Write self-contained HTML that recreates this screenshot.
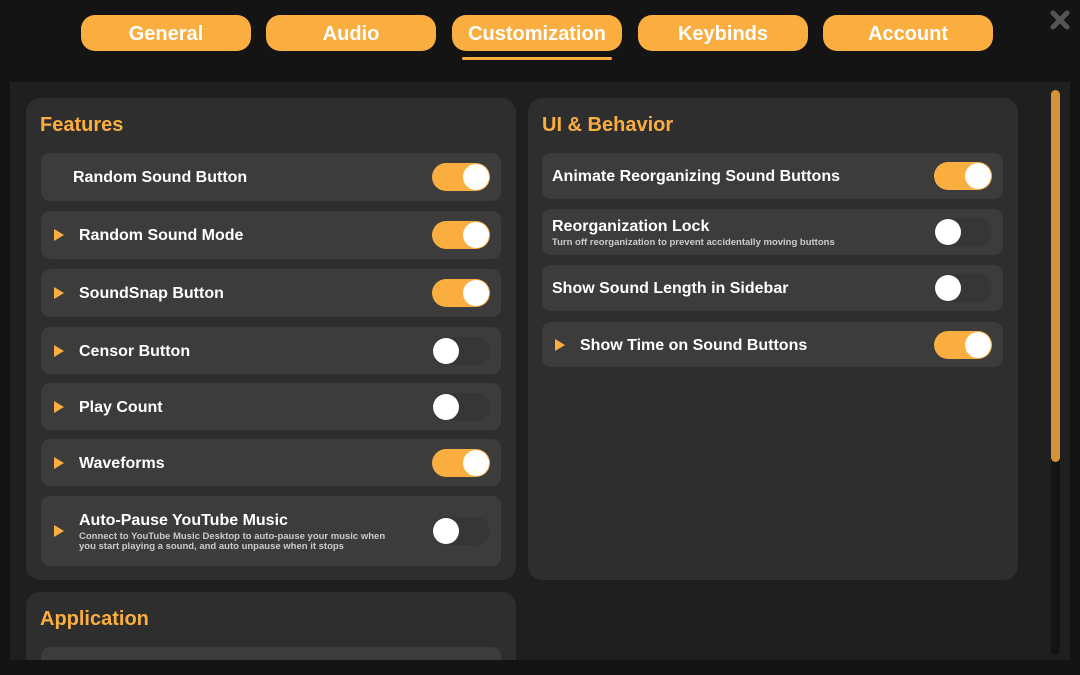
<!DOCTYPE html>
<html style="overflow:hidden"><head><style>
*{margin:0;padding:0;box-sizing:border-box}
body{width:1080px;height:675px;background:#141414;font-family:"Liberation Sans",sans-serif;font-weight:bold;position:relative;overflow:hidden;color:#fff}
.tab{position:absolute;top:15px;height:36px;width:170px;background:#fbae40;border-radius:14px;text-align:center;line-height:39px;font-size:20px;color:#fff}
.ul{position:absolute;left:462px;top:57px;width:150px;height:3px;background:#fbae40;border-radius:2px}
.panel{position:absolute;left:10px;top:82px;width:1060px;height:578px;background:#1f1f1f;overflow:hidden}
.sec{position:absolute;background:#2e2e2e;border-radius:14px}
.sec h2{position:absolute;left:14px;top:16px;font-size:20px;color:#fbae40}
.row{position:absolute;left:15px;width:460px;background:#3c3c3c;border-radius:9px}
.row .t{position:absolute;left:38px;font-size:16px;top:50%;transform:translateY(-50%);margin-top:1px}
.row .a{position:absolute;left:13px;top:50%;margin-top:-6px;width:0;height:0;border-left:10px solid #fbae40;border-top:6px solid transparent;border-bottom:6px solid transparent}
.tg{position:absolute;right:11px;top:50%;margin-top:-14px;width:58px;height:28px;border-radius:14px;background:#363636}
.tg::after{content:"";position:absolute;left:1px;top:1px;width:26px;height:26px;border-radius:50%;background:#fff}
.tg.on{background:#fbae40}.tg.on::after{left:31px}
.sub{font-size:9.5px;color:#ccc;font-weight:bold;line-height:10px;margin-top:2px}
</style></head><body>
<div class="tab" style="left:81px">General</div>
<div class="tab" style="left:266px">Audio</div>
<div class="tab" style="left:452px">Customization</div>
<div class="tab" style="left:638px">Keybinds</div>
<div class="tab" style="left:823px">Account</div>
<div class="ul"></div>
<svg style="position:absolute;left:1050px;top:10px" width="20" height="20" viewBox="0 0 20 20"><path d="M3 3L17 17M17 3L3 17" stroke="#555" stroke-width="5" stroke-linecap="round"/></svg>
<div class="panel">
 <div class="sec" style="left:16px;top:16px;width:490px;height:482px">
  <h2>Features</h2>
  <div class="row" style="top:55px;height:48px"><div class="t" style="left:32px">Random Sound Button</div><div class="tg on"></div></div>
  <div class="row" style="top:113px;height:48px"><div class="a"></div><div class="t">Random Sound Mode</div><div class="tg on"></div></div>
  <div class="row" style="top:171px;height:48px"><div class="a"></div><div class="t">SoundSnap Button</div><div class="tg on"></div></div>
  <div class="row" style="top:229px;height:47px"><div class="a"></div><div class="t">Censor Button</div><div class="tg"></div></div>
  <div class="row" style="top:285px;height:47px"><div class="a"></div><div class="t">Play Count</div><div class="tg"></div></div>
  <div class="row" style="top:341px;height:47px"><div class="a"></div><div class="t">Waveforms</div><div class="tg on"></div></div>
  <div class="row" style="top:398px;height:70px"><div class="a"></div><div class="t">Auto-Pause YouTube Music<div class="sub">Connect to YouTube Music Desktop to auto-pause your music when<br>you start playing a sound, and auto unpause when it stops</div></div><div class="tg"></div></div>
 </div>
 <div class="sec" style="left:16px;top:510px;width:490px;height:120px">
  <h2>Application</h2>
  <div class="row" style="top:55px;height:40px"></div>
 </div>
 <div class="sec" style="left:518px;top:16px;width:490px;height:482px">
  <h2>UI &amp; Behavior</h2>
  <div class="row" style="top:55px;height:46px;left:14px;width:461px"><div class="t" style="left:10px">Animate Reorganizing Sound Buttons</div><div class="tg on"></div></div>
  <div class="row" style="top:111px;height:46px;left:14px;width:461px"><div class="t" style="left:10px">Reorganization Lock<div class="sub">Turn off reorganization to prevent accidentally moving buttons</div></div><div class="tg"></div></div>
  <div class="row" style="top:167px;height:46px;left:14px;width:461px"><div class="t" style="left:10px">Show Sound Length in Sidebar</div><div class="tg"></div></div>
  <div class="row" style="top:224px;height:45px;left:14px;width:461px"><div class="a"></div><div class="t">Show Time on Sound Buttons</div><div class="tg on"></div></div>
 </div>
 <div style="position:absolute;left:1041px;top:8px;width:9px;height:565px;background:#141414;border-radius:5px"></div>
 <div style="position:absolute;left:1041px;top:8px;width:9px;height:372px;background:#d4953a;border-radius:5px"></div>
</div>
</body></html>
